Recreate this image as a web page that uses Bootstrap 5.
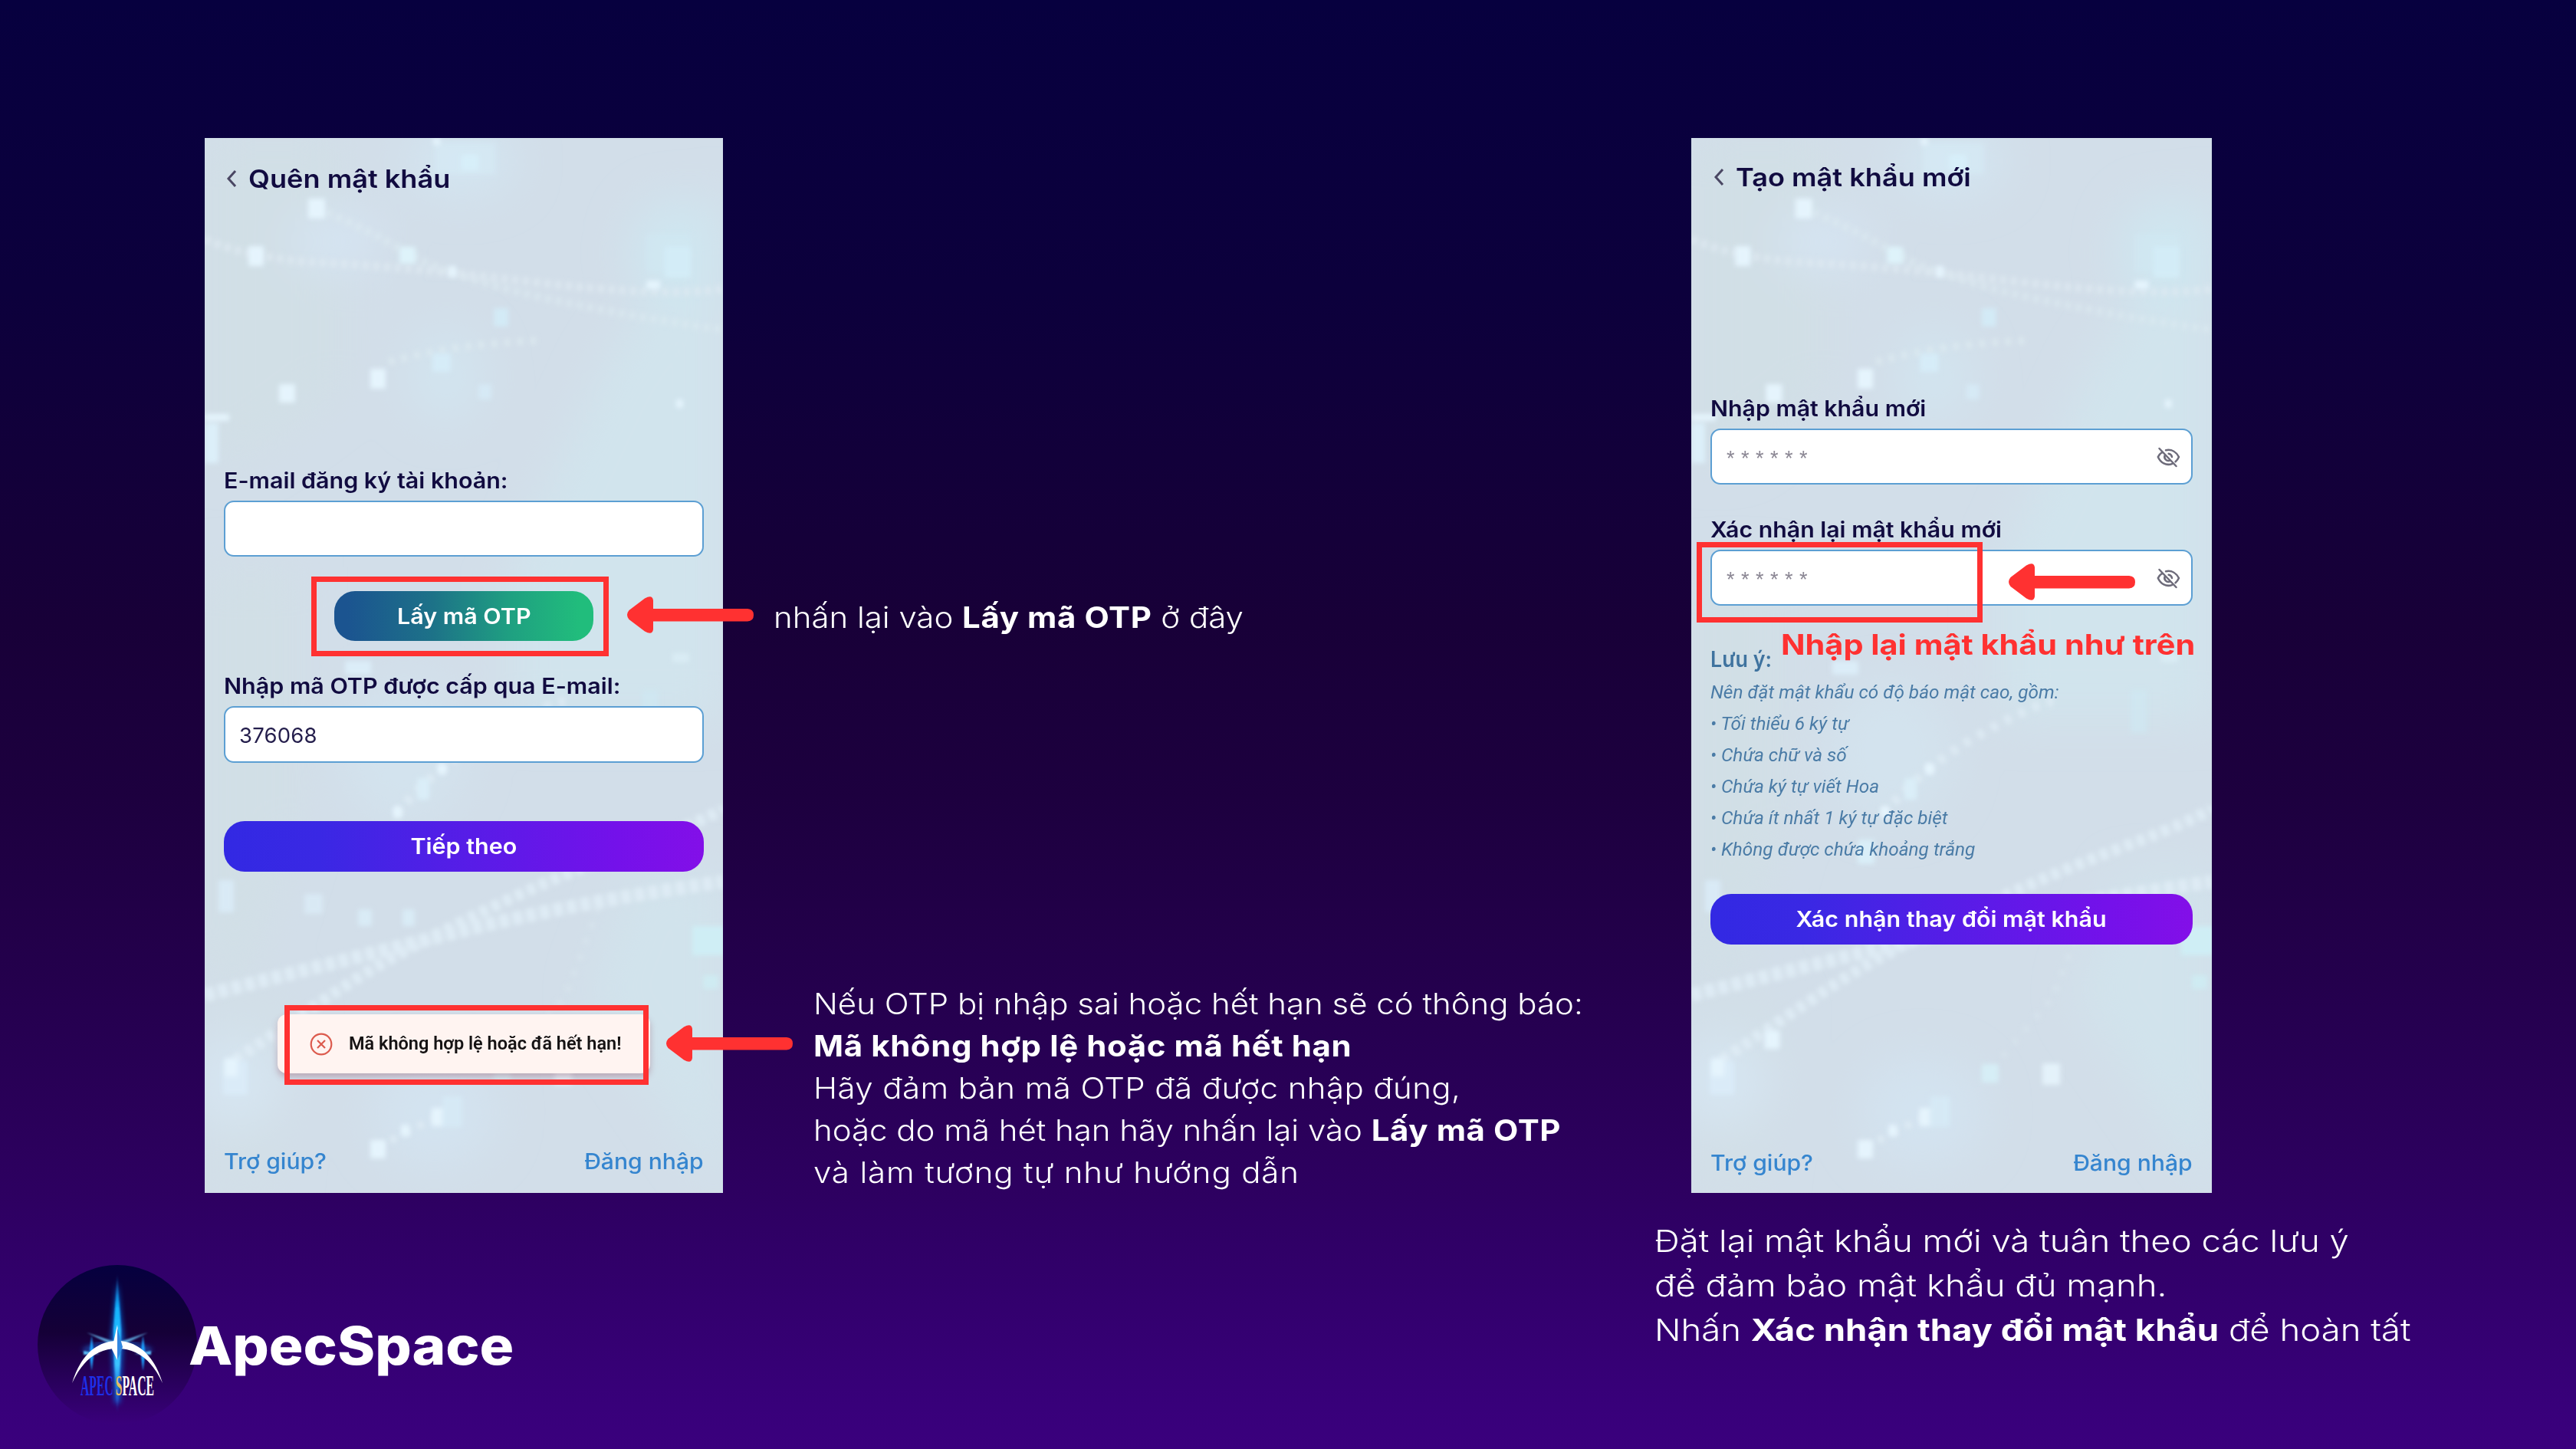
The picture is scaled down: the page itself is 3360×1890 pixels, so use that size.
<!DOCTYPE html>
<html lang="vi">
<head>
<meta charset="utf-8">
<meta name="viewport" content="width=device-width, initial-scale=1">
<title>ApecSpace</title>
<link href="https://cdn.jsdelivr.net/npm/bootstrap@5.3.0/dist/css/bootstrap.min.css" rel="stylesheet">
<style>
body{margin:0;width:3360px;height:1890px;overflow:hidden;font-family:Inter,"Noto Sans",sans-serif;background:linear-gradient(180deg,#07003f 0,#0c003c 20%,#180038 43%,#1d003f 55%,#24004d 68%,#2d0060 82%,#38007a 97%,#3a007d 100%)}
.stage{padding-top:180px;height:1890px}
.col-left{width:894px;margin-left:49px}
.col-mid{width:1215px}
.col-right{width:1100px}

/* phone screens */
.phone{position:relative;height:1376px;background:#d2dfe9;color:#110b40;padding:0 25px}
.phone-a{width:676px;margin-left:218px}
.phone-b{width:679px;margin-left:48px}
.phone>*:not(.texture):not(.marker){position:relative}
.texture{position:absolute;inset:0;width:100%;height:100%}
.phone-a .head{padding-top:31px}
.phone-b .head{padding-top:29px}
.chev{width:14px;height:24px;margin:10px 15px 0 3px}
.phone-b .chev{margin-left:4px}
.ttl{height:44px;line-height:44px;font-size:33px;font-weight:600;margin:0;white-space:nowrap;transform:scaleX(1.095);transform-origin:left}
.lbl{height:36px;line-height:36px;font-size:28px;font-weight:600;margin:41px 0 8px;white-space:nowrap;transform:scaleX(1.087);transform-origin:left}
.phone-b .lbl{transform:scaleX(1.081)}
.phone-a .lbl-first{margin-top:354px}
.phone-b .lbl-first{margin-top:262px}
.phone-b .lbl-note{margin:52px 0 5px;color:#3f739f;transform:scaleX(.958)}
.field{height:73px;border:2px solid #5c9fd3;border-radius:13px;background:#fff;font-size:27.5px;color:#241e4c;padding:2px 18px 0;letter-spacing:.2px}
.field-otp{height:74px}
.stars{font-family:"Liberation Sans",sans-serif;font-size:27px;letter-spacing:8.5px;color:#8b8794;padding:6px 19px 0}
.eye{right:16px;top:22px;width:31px;height:31px}
.pill{border:0;border-radius:27px;height:66px;line-height:67px;padding:0;font-size:28px;font-weight:600;color:#fff;display:block;text-align:center}
.pill span{display:inline-block;transform:scaleX(1.088)}
.pill-v{background:linear-gradient(90deg,#3229e3 0,#3a28e4 20%,#7411ea 82%,#830fe8 100%);margin-top:76px}
.phone-b .pill-v{margin-top:37px}
.pill-g{background:linear-gradient(90deg,#1b5490 5%,#1d7288 38%,#1fa081 68%,#21bd7c 95%);width:338px;height:65px;margin-top:45px}
.toastbox{margin:186px 0 0 70px;width:486px;height:77px;background:#fff4f1;border-radius:12px;box-shadow:0 5px 9px rgba(150,90,110,.4);padding-left:42px;gap:21px;font:600 23px/79px Roboto,sans-serif;color:#151213;white-space:nowrap}
.toastbox span{transform:scaleX(1.022);transform-origin:left}
.links{height:36px;line-height:36px;font-size:28px;font-weight:500;margin-top:97px}
.phone-b .links{margin-top:267px}
.links a{color:#3585cf;text-decoration:none;transform:scaleX(1.075);transform-origin:left}
.links a:last-child{transform-origin:right}
.hints{font:italic 400 23px/41px Roboto,sans-serif;color:#4a7ba6;margin:0;white-space:nowrap;transform:scaleX(1.06);transform-origin:left}

/* red annotations laid over the screens */
.marker{position:absolute}
.redbox{border:7px solid #ff3131}
.box-otp{left:139px;top:572px;width:388px;height:104px}
.box-toast{left:104px;top:1131px;width:475px;height:104px}
.box-pass{left:7px;top:527px;width:373px;height:105px}
.arw{width:167px;height:48px}
.arw-otp{left:550px;top:598px}
.arw-toast{left:601px;top:1157px}
.arw-pass{left:413px;top:555px}
.redtext{left:117px;top:638px;font-size:36.5px;line-height:46px;font-weight:700;color:#ff3131;white-space:nowrap;transform:scaleX(1.135);transform-origin:left}

/* captions */
.cap{font-size:38.5px;line-height:55px;font-weight:300;color:#fff;white-space:pre;margin:449px 0 0 118px;transform:scaleX(1.09);transform-origin:left}
.cap b{font-weight:700;letter-spacing:.55px}
.cap .w1{letter-spacing:.39px}
.cap .w2{letter-spacing:.8px}
.cap-first{margin:598px 0 0 66px}
.cap-r{font-size:40px;line-height:58px;margin:34px 0 0;transform:scaleX(1.137)}
.cap-r b{letter-spacing:0}

.brand{margin-top:94px}
.brandname{font-size:69px;font-weight:800;color:#fff;line-height:80px;margin:65px 0 0 -11px;position:relative;transform:scaleX(1.08);transform-origin:left}
</style>
<script src="https://cdn.jsdelivr.net/npm/bootstrap@5.3.0/dist/js/bootstrap.bundle.min.js"></script>
</head>
<body>
<svg width="0" height="0" class="position-absolute">
<defs>
<filter id="b2"><feGaussianBlur stdDeviation="3"/></filter>
<filter id="b30" x="-50%" y="-50%" width="200%" height="200%"><feGaussianBlur stdDeviation="28"/></filter>
<symbol id="tex" viewBox="0 0 676 1376" preserveAspectRatio="none">
<rect width="676" height="1376" fill="#d2dee9"/>
<g filter="url(#b30)">
<path d="M0 0H180V330L60 420H0Z" fill="#d1dfe6"/><path d="M676 60L520 300 400 560V760H676Z" fill="#d1e4ed"/>
<ellipse cx="170" cy="135" rx="60" ry="40" fill="#d5e4f2"/><ellipse cx="335" cy="30" rx="70" ry="45" fill="#d3e5f1"/>
<ellipse cx="315" cy="310" rx="50" ry="60" fill="#d2e4ef"/><ellipse cx="615" cy="150" rx="60" ry="70" fill="#cfe6f0"/>
<path d="M0 560H120V900L60 1100H0Z" fill="#d1dfe6"/><ellipse cx="300" cy="1270" rx="80" ry="70" fill="#d3e3f0"/>
<path d="M676 960H560L500 1120 676 1376Z" fill="#d1e3ec"/><path d="M0 1130L120 1120 90 1376H0Z" fill="#d2dfe7"/>
<ellipse cx="40" cy="1230" rx="60" ry="60" fill="#d6e5f1"/><ellipse cx="260" cy="800" rx="80" ry="90" fill="#d3e3ee"/>
</g>
<g filter="url(#b2)" fill="none">
<path d="M0 132Q60 158 160 163T430 188T676 197" stroke="#dfeaf1" stroke-width="11" stroke-dasharray="8 6" opacity=".75"/>
<path d="M146 91Q210 118 265 150T440 208T676 250" stroke="#deebf1" stroke-width="11" stroke-dasharray="8 6" opacity=".6"/>
<path d="M240 292Q330 268 440 264" stroke="#deebf1" stroke-width="10" stroke-dasharray="8 9" opacity=".7"/>
<path d="M0 1118Q200 1068 340 1033T676 970" stroke="#deebf4" stroke-width="18" stroke-dasharray="13 5"/>
<path d="M39 1203Q120 1148 177 1110T340 1020T560 925T676 872" stroke="#deebf4" stroke-width="15" stroke-dasharray="11 6"/>
<path d="M250 882Q300 820 375 778T470 735" stroke="#deebf4" stroke-width="12" stroke-dasharray="9 11" opacity=".9"/>
<path d="M225 1317L315 1270" stroke="#deebf4" stroke-width="9" stroke-dasharray="8 12"/>
<path d="M390 1215L470 1120 515 1000" stroke="#dae8f0" stroke-width="8" stroke-dasharray="7 15" opacity=".6"/>
</g>
<g filter="url(#b2)" fill="#e5f4fd">
<rect x="135" y="79" width="22" height="26"/><rect x="57" y="141" width="20" height="26"/><rect x="254" y="142" width="21" height="22" fill="#def3fa"/>
<rect x="335" y="22" width="22" height="20" fill="#d7f1fa"/><rect x="300" y="6" width="80" height="42" fill="#d6edf8" opacity=".45"/>
<rect x="600" y="142" width="34" height="40" fill="#d4edf7"/><rect x="575" y="125" width="60" height="50" fill="#d2ebf5" opacity=".35"/>
<rect x="377" y="222" width="19" height="24" fill="#d3eaf6"/><rect x="297" y="281" width="24" height="24" fill="#d6ecf8"/>
<rect x="216" y="301" width="20" height="26"/><rect x="97" y="321" width="21" height="24"/><rect x="357" y="321" width="17" height="20" fill="#d6e9f5"/>
<rect x="0" y="372" width="18" height="52" fill="#dceff9"/><rect x="0" y="360" width="32" height="9"/><rect x="615" y="341" width="9" height="11"/>
<rect x="318" y="167" width="10" height="14"/><rect x="576" y="186" width="18" height="11"/><rect x="298" y="0" width="9" height="9"/>
<rect x="183" y="682" width="34" height="18" fill="#dbedf8"/><rect x="610" y="672" width="22" height="12" fill="#d9ecf4"/>
<rect x="277" y="835" width="16" height="28" fill="#daeef8"/><rect x="304" y="816" width="11" height="14"/><rect x="246" y="872" width="11" height="15"/>
<rect x="216" y="915" width="22" height="32" fill="#d9eef8"/><rect x="570" y="720" width="22" height="56" fill="#cfe9f4" opacity=".6"/>
<rect x="18" y="968" width="20" height="42" fill="#d9eaf6"/><rect x="130" y="986" width="24" height="26" fill="#d9e9f4"/><rect x="200" y="1006" width="18" height="22" fill="#d9ebf6"/><rect x="258" y="1006" width="16" height="22" fill="#d9ebf6"/>
<rect x="24" y="1204" width="32" height="44" fill="#daebf8"/><rect x="26" y="1200" width="17" height="24"/><rect x="95" y="1164" width="20" height="24"/><rect x="636" y="1028" width="42" height="38" fill="#cfeef5"/><rect x="650" y="1092" width="20" height="18" fill="#cfebf2"/>
<rect x="377" y="1208" width="22" height="24" fill="#d6eef6"/><rect x="456" y="1207" width="23" height="28" fill="#e4f2fa"/>
<rect x="296" y="1265" width="19" height="24"/><rect x="310" y="1250" width="26" height="40" fill="#d6e9f5"/><rect x="256" y="1287" width="11" height="15"/><rect x="216" y="1307" width="20" height="24"/>
</g>
</symbol>
<symbol id="arrow" viewBox="0 0 167 48"><path d="M3.500 18Q-1.500 24 3.500 30L24 45.500Q34 51 35 43V32.500H158Q166 32 166 24.200T158 16H35V5Q34-3 24 2.500Z" fill="#ff3131"/></symbol>
<symbol id="eyeoff" viewBox="0 0 31 31"><path fill="none" stroke="#6d6b7a" stroke-width="2.500" stroke-linecap="round" d="M12 6.200C20 4.500 26 9 29 15C28 17.400 26.500 19.500 24.500 21.200M7.500 8.500C5 10.200 3 12.500 1.800 15C5 22.500 12.500 27 20.500 23.800M3.500 4L25.500 27M10.800 12.500C8.800 17 13 21.500 17.800 19.400M15.600 10.800C18 11.200 19.600 12.800 20 15"/></symbol>
<symbol id="back" viewBox="0 0 14 24"><path d="M12 2L3 12L12 22" fill="none" stroke="#4a4763" stroke-width="3"/></symbol>
</defs>
</svg>
<main class="stage d-flex align-items-start">
<section class="col-left flex-shrink-0">
  <div class="phone phone-a">
    <svg class="texture"><use href="#tex"/></svg>
    <header class="head d-flex"><svg class="chev"><use href="#back"/></svg><h1 class="ttl">Quên mật khẩu</h1></header>
    <div class="lbl lbl-first">E-mail đăng ký tài khoản:</div>
    <input class="form-control field">
    <button class="btn pill pill-g mx-auto"><span>Lấy mã OTP</span></button>
    <div class="lbl">Nhập mã OTP được cấp qua E-mail:</div>
    <input class="form-control field field-otp" value="376068">
    <button class="btn pill pill-v w-100"><span>Tiếp theo</span></button>
    <div class="toastbox d-flex align-items-center"><svg width="30" height="30" viewBox="0 0 30 30" class="flex-shrink-0"><g fill="none" stroke="#dc5b4e" stroke-width="2.200"><circle cx="15" cy="15" r="13.300"/><path d="M10 10L20 20M20 10L10 20"/></g></svg><span>Mã không hợp lệ hoặc đã hết hạn!</span></div>
    <div class="links d-flex justify-content-between"><a href="#">Trợ giúp?</a><a href="#">Đăng nhập</a></div>
    <div class="marker redbox box-otp"></div>
    <div class="marker redbox box-toast"></div>
    <svg class="marker arw arw-otp"><use href="#arrow"/></svg>
    <svg class="marker arw arw-toast"><use href="#arrow"/></svg>
  </div>
  <div class="brand d-flex">
    <svg width="208" height="208" viewBox="0 0 208 208" class="flex-shrink-0">
      <defs>
        <linearGradient id="lg" x1="0" y1="0" x2="0" y2="1"><stop offset="0" stop-color="#05003f"/><stop offset=".42" stop-color="#150037"/><stop offset="1" stop-color="#3a007c"/></linearGradient>
        <linearGradient id="beam" gradientUnits="userSpaceOnUse" x1="0" y1="12" x2="0" y2="194"><stop offset="0" stop-color="#1a9cff" stop-opacity=".2"/><stop offset=".25" stop-color="#12b4ff"/><stop offset=".65" stop-color="#3cc4ff"/><stop offset="1" stop-color="#1a7cff" stop-opacity="0"/></linearGradient>
        <filter id="gl" x="-300%" width="700%" y="-20%" height="140%"><feGaussianBlur stdDeviation="3.500"/></filter>
        <filter id="g1" x="-100%" width="300%" y="-50%" height="200%"><feGaussianBlur stdDeviation=".8"/></filter>
      </defs>
      <circle cx="104" cy="104" r="104" fill="url(#lg)"/>
      <path d="M104 22L112 95 107 180 101 180 96 95Z" fill="#0a7df5" opacity=".8" filter="url(#gl)"/>
      <path d="M104 12L109 85 108 125 104.500 194H103.500L100 125 99 85Z" fill="url(#beam)" filter="url(#g1)"/>
      <path d="M64 88L104 101L144 88L104 108Z" fill="#6cc8fb" opacity=".8" filter="url(#g1)"/>
      <path d="M60 112Q104 92 148 112" fill="none" stroke="#1b86ff" stroke-width="5" opacity=".7" filter="url(#gl)"/>
      <path d="M70.500 92L73.500 115L70.500 138L67.500 115ZM137.500 92L140.500 115L137.500 138L134.500 115Z" fill="#1fa0ff" filter="url(#g1)"/>
      <path d="M60 112L82 116L60 117ZM148 112L126 116L148 117Z" fill="#5cc4ff" filter="url(#g1)"/>
      <path d="M45 154C56 117 78 99 104 99S152 117 163 154C149 124 130 109 104 109S59 124 45 154Z" fill="#fff"/>
      <path d="M104 78L107 106 104 124 97 110Z" fill="#fff"/><path d="M104 82L111 107 104 124Z" fill="#2f86e0"/>
      <text x="56" y="170" font-family="Liberation Serif, serif" font-size="37" font-weight="700" textLength="96" lengthAdjust="spacingAndGlyphs"><tspan fill="#1d2fe8">APEC</tspan><tspan dx="7" fill="#e8bd62">S</tspan><tspan fill="#fff">PACE</tspan></text>
    </svg>
    <div class="brandname">ApecSpace</div>
  </div>
</section>
<section class="col-mid flex-shrink-0">
<p class="cap cap-first">nhấn lại vào <b>Lấy mã OTP</b> ở đây</p>
<p class="cap">Nếu OTP bị nhập sai hoặc hết hạn sẽ có thông báo:
<b>Mã không hợp lệ hoặc mã hết hạn</b>
<span class="w1">Hãy đảm bản mã OTP đã được nhập đúng,</span>
hoặc do mã hét hạn hãy nhấn lại vào <b>Lấy mã OTP</b>
<span class="w2">và làm tương tự như hướng dẫn</span></p>
</section>
<section class="col-right flex-shrink-0">
  <div class="phone phone-b">
    <svg class="texture"><use href="#tex"/></svg>
    <header class="head d-flex"><svg class="chev"><use href="#back"/></svg><h1 class="ttl">Tạo mật khẩu mới</h1></header>
    <div class="lbl lbl-first">Nhập mật khẩu mới</div>
    <div class="position-relative"><input class="form-control field stars" value="******"><svg class="eye position-absolute"><use href="#eyeoff"/></svg></div>
    <div class="lbl">Xác nhận lại mật khẩu mới</div>
    <div class="position-relative"><input class="form-control field stars" value="******"><svg class="eye position-absolute"><use href="#eyeoff"/></svg></div>
    <div class="lbl lbl-note">Lưu ý:</div>
    <ul class="hints list-unstyled">
      <li>Nên đặt mật khẩu có độ báo mật cao, gồm:</li>
      <li>• Tối thiểu 6 ký tự</li>
      <li>• Chứa chữ và số</li>
      <li>• Chứa ký tự viết Hoa</li>
      <li>• Chứa ít nhất 1 ký tự đặc biệt</li>
      <li>• Không được chứa khoảng trắng</li>
    </ul>
    <button class="btn pill pill-v w-100"><span>Xác nhận thay đổi mật khẩu</span></button>
    <div class="links d-flex justify-content-between"><a href="#">Trợ giúp?</a><a href="#">Đăng nhập</a></div>
    <div class="marker redbox box-pass"></div>
    <svg class="marker arw arw-pass"><use href="#arrow"/></svg>
    <div class="marker redtext">Nhập lại mật khẩu như trên</div>
  </div>
  <p class="cap cap-r">Đặt lại mật khẩu mới và tuân theo các lưu ý
để đảm bảo mật khẩu đủ mạnh.
Nhấn <b>Xác nhận thay đổi mật khẩu</b> để hoàn tất</p>
</section>
</main>
</body>
</html>
